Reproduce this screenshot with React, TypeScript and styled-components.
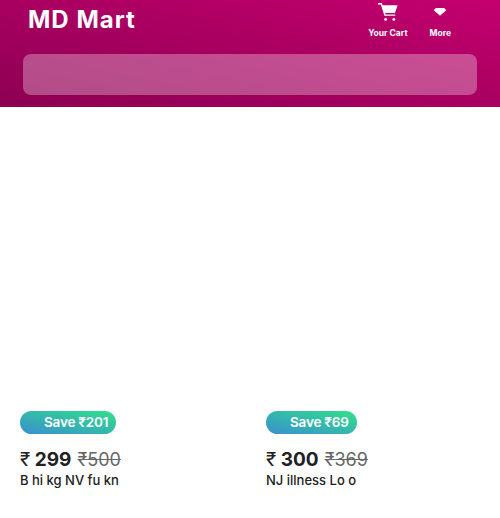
import React from 'react';
import styled, { createGlobalStyle } from 'styled-components';

const products = [
    { id: 1, save: 201, price: 299, mrp: 500, title: 'B hi kg NV fu kn' },
    { id: 2, save: 69, price: 300, mrp: 369, title: 'NJ illness Lo o' },
];

const App: React.FC = () => {
    return (
        <>
            <GlobalStyle />
            <Header>
                <TopRow>
                    <Logo>MD Mart</Logo>
                    <Actions>
                        <Action>
                            <IconSlot>
                                <svg width="20" height="20" viewBox="0 0 20 20" fill="#fff">
                                    <path d="M0 2h3.8l.8 2.2h15l-2.6 7.8H7l.5 1.6h9.8v1.2H6.4L2.8 3.4H0z" />
                                    <circle cx="7.6" cy="18.4" r="1.4" />
                                    <circle cx="15.8" cy="18.4" r="1.4" />
                                </svg>
                            </IconSlot>
                            <ActionLabel>Your Cart</ActionLabel>
                        </Action>
                        <Action>
                            <IconSlot>
                                <svg width="14" height="10" viewBox="0 0 14 10" fill="#fff">
                                    <path d="M3.2 2h7.6q.6 0 1 .5l1.4 1.8L7 9.8.8 4.3l1.4-1.8q.4-.5 1-.5z" />
                                </svg>
                            </IconSlot>
                            <ActionLabel>More</ActionLabel>
                        </Action>
                    </Actions>
                </TopRow>
                <SearchBox />
            </Header>
            <Grid>
                {products.map((item) => (
                    <Card key={item.id}>
                        <ImageArea />
                        <SaveBadge>Save ₹{item.save}</SaveBadge>
                        <PriceRow>
                            <Price>
                                <Rupee>₹</Rupee> {item.price}
                            </Price>
                            <Mrp>₹{item.mrp}</Mrp>
                        </PriceRow>
                        <Title>{item.title}</Title>
                    </Card>
                ))}
            </Grid>
        </>
    );
};

const GlobalStyle = createGlobalStyle`
    body {
        margin: 0;
        background: #fff;
        font-family: 'Inter', 'Noto Sans', sans-serif;
    }
`;

const Header = styled.header`
    height: 107px;
    box-sizing: border-box;
    padding: 0 23px;
    background: linear-gradient(to top right, #8c0052, #c4006f);
`;

const TopRow = styled.div`
    display: flex;
    justify-content: space-between;
    height: 54px;
`;

const Logo = styled.div`
    padding: 5px 0 0 5px;
    font-size: 24px;
    line-height: 30px;
    font-weight: 700;
    letter-spacing: 1px;
    color: #fff;
`;

const Actions = styled.div`
    display: flex;
    align-items: flex-start;
    gap: 22px;
    padding-right: 26px;
`;

const Action = styled.div`
    display: flex;
    flex-direction: column;
    align-items: center;
`;

const IconSlot = styled.div`
    display: flex;
    align-items: center;
    justify-content: center;
    height: 22px;
    margin-bottom: 5px;
`;

const ActionLabel = styled.span`
    font-size: 8.5px;
    line-height: 12px;
    font-weight: 700;
    color: #fff;
`;

const SearchBox = styled.div`
    height: 41px;
    border-radius: 8px;
    background: rgba(255, 255, 255, 0.3);
`;

const Grid = styled.div`
    display: grid;
    grid-template-columns: 246px 1fr;
    padding-left: 20px;
`;

const Card = styled.div`
    display: flex;
    flex-direction: column;
    align-items: flex-start;
`;

const ImageArea = styled.div`
    height: 304px;
`;

const SaveBadge = styled.div`
    height: 23px;
    box-sizing: border-box;
    padding: 0 8px 0 24px;
    border-radius: 12px;
    font-size: 13.5px;
    line-height: 23px;
    font-weight: 600;
    letter-spacing: -0.2px;
    color: #fff;
    background: linear-gradient(to top right, #3a8fd0, #2fe08a);
`;

const PriceRow = styled.div`
    display: flex;
    align-items: baseline;
    gap: 6px;
    margin-top: 14px;
    height: 24px;
`;

const Price = styled.span`
    font-size: 19px;
    line-height: 24px;
    font-weight: 700;
    color: #212121;
`;

const Rupee = styled.span`
    font-weight: 400;
`;

const Mrp = styled.span`
    font-size: 18px;
    line-height: 24px;
    color: #666;
    text-decoration: line-through;
`;

const Title = styled.div`
    margin-top: -1px;
    font-size: 13px;
    line-height: 18px;
    font-weight: 500;
    color: #212121;
`;

export default App;
